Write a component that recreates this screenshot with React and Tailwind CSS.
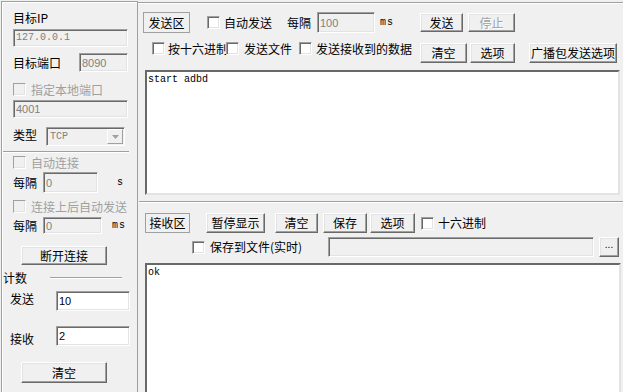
import React from 'react';

// Sunken edit box, classic Windows look
const Field = ({ className = '', disabled, mono, children }) => (
  <div
    className={`flex items-center overflow-hidden border border-t-[#a0a0a0] border-l-[#a0a0a0] border-b-white border-r-white shadow-[inset_1px_1px_0_#696969,inset_-1px_-1px_0_#e3e3e3] pl-[2px] ${
      disabled ? 'bg-[#f0f0f0] text-[#808080]' : 'bg-white text-black'
    } ${mono ? "font-['Liberation_Mono',monospace] text-[10px]" : "font-['Liberation_Sans',sans-serif] text-[11px]"} ${className}`}
  >
    {children}
  </div>
);

const Btn = ({ className = '', disabled, children }) => (
  <div
    className={`flex items-center justify-center bg-[#f0f0f0] border border-t-white border-l-white border-b-[#696969] border-r-[#696969] shadow-[inset_-1px_-1px_0_#a0a0a0,inset_1px_1px_0_#e3e3e3] ${
      disabled ? 'text-[#a0a0a0] [text-shadow:1px_1px_0_#fff]' : 'text-black'
    } ${className}`}
  >
    {children}
  </div>
);

const Check = ({ disabled, className = '' }) => (
  <div
    className={`w-[13px] h-[13px] shrink-0 border border-t-[#a0a0a0] border-l-[#a0a0a0] border-b-white border-r-white ${
      disabled ? 'bg-[#f0f0f0] shadow-[inset_-1px_-1px_0_#e3e3e3]' : 'bg-white shadow-[inset_1px_1px_0_#696969,inset_-1px_-1px_0_#e3e3e3]'
    } ${className}`}
  />
);

const Area = ({ className = '', children }) => (
  <div
    className={`bg-white border-2 border-t-[#696969] border-l-[#696969] border-b-[#e3e3e3] border-r-[#e3e3e3] font-['Liberation_Mono',monospace] text-[10px] leading-[12px] pl-[1px] pt-[2px] ${className}`}
  >
    {children}
  </div>
);

const LeftPanel = () => (
  <div className="ml-[1px] mt-[1px] w-[137px] h-[400px] shrink-0 border-l border-t border-r border-[#a0a0a0] shadow-[inset_1px_1px_0_#fff] flex flex-col pl-[11px]">
    <div className="mt-[10px] h-[12px]">目标IP</div>
    <Field disabled mono className="mt-[5px] w-[115px] h-[18px]">127.0.0.1</Field>
    <div className="mt-[6px] h-[19px] flex items-center">
      <span className="w-[48px]">目标端口</span>
      <Field disabled className="ml-[18px] w-[49px] h-[19px]">8090</Field>
    </div>
    <div className="mt-[11px] h-[13px] flex items-center text-[#a0a0a0]">
      <Check disabled />
      <span className="ml-[5px]">指定本地端口</span>
    </div>
    <Field disabled className="mt-[4px] w-[115px] h-[18px]">4001</Field>
    <div className="mt-[9px] h-[19px] flex items-center">
      <span className="w-[24px] -mt-[4px]">类型</span>
      <div className="ml-[9px] w-[79px] h-[19px] flex items-center justify-between border border-t-[#a0a0a0] border-l-[#a0a0a0] border-b-white border-r-white shadow-[inset_1px_1px_0_#696969] bg-[#f0f0f0] pl-[3px] pr-[1px] font-['Liberation_Mono',monospace] text-[10px] text-[#808080]">
        <span>TCP</span>
        <div className="w-[16px] h-[15px] flex items-center justify-center border border-t-white border-l-white border-b-[#a0a0a0] border-r-[#a0a0a0]">
          <svg width="7" height="4" viewBox="0 0 7 4"><path d="M0 0h7L3.5 4z" fill="#a0a0a0" /></svg>
        </div>
      </div>
    </div>
    <div className="mt-[5px] -ml-[10px] w-[126px] h-[2px] border-t border-[#a0a0a0] border-b border-b-white" />
    <div className="mt-[3px] h-[13px] flex items-center text-[#a0a0a0]">
      <Check disabled />
      <span className="ml-[5px]">自动连接</span>
    </div>
    <div className="mt-[3px] h-[21px] flex items-center">
      <span className="w-[24px]">每隔</span>
      <Field disabled className="ml-[6px] w-[55px] h-[21px]">0</Field>
      <span className="ml-[19px] font-['Liberation_Mono',monospace] text-[10px]">s</span>
    </div>
    <div className="mt-[7px] h-[13px] flex items-center text-[#a0a0a0]">
      <Check disabled />
      <span className="ml-[5px]">连接上后自动发送</span>
    </div>
    <div className="mt-[4px] h-[17px] flex items-center">
      <span className="w-[24px]">每隔</span>
      <Field disabled className="ml-[6px] w-[59px] h-[17px]">0</Field>
      <span className="ml-[10px] font-['Liberation_Mono',monospace] text-[10px] tracking-[1px]">ms</span>
    </div>
    <Btn className="mt-[12px] ml-[8px] w-[86px] h-[19px]">断开连接</Btn>
    <div className="mt-[7px] h-[12px] -ml-[10px] flex items-center">
      <span className="w-[24px]">计数</span>
      <div className="ml-[23px] w-[72px] h-[2px] border-t border-[#a0a0a0] border-b border-b-white" />
    </div>
    <div className="mt-[7px] h-[20px] flex items-start -ml-[3px]">
      <span className="mt-[2px] w-[24px]">发送</span>
      <Field className="ml-[22px] w-[74px] h-[20px]">10</Field>
    </div>
    <div className="mt-[15px] h-[20px] flex items-start -ml-[3px]">
      <span className="mt-[7px] w-[24px]">接收</span>
      <Field className="ml-[22px] w-[74px] h-[20px]">2</Field>
    </div>
    <Btn className="mt-[16px] ml-[8px] w-[86px] h-[21px]">清空</Btn>
  </div>
);

const RightPanel = () => (
  <div className="mt-[2px] flex-1 h-[400px] border-t border-[#a0a0a0] shadow-[inset_0_1px_0_#fff] flex flex-col">
    {/* send row 1 */}
    <div className="mt-[9px] h-[21px] pl-[5px] flex items-center">
      <div className="w-[47px] h-[21px] flex items-center justify-center border border-[#a0a0a0]">发送区</div>
      <Check className="ml-[17px]" />
      <span className="ml-[4px] w-[48px]">自动发送</span>
      <span className="ml-[15px] w-[24px]">每隔</span>
      <Field disabled className="ml-[6px] w-[58px] h-[21px]">100</Field>
      <span className="ml-[5px] w-[40px] font-['Liberation_Mono',monospace] text-[10px] tracking-[1px]">ms</span>
      <Btn className="w-[43px] h-[19px]">发送</Btn>
      <Btn disabled className="ml-[5px] w-[47px] h-[19px]">停止</Btn>
    </div>
    {/* send row 2 */}
    <div className="mt-[9px] h-[21px] pl-[14px] flex items-start">
      <Check />
      <span className="ml-[3px] w-[58px] whitespace-nowrap mt-[1px]">按十六进制</span>
      <Check className="relative z-10" />
      <span className="ml-[5px] w-[48px] mt-[1px]">发送文件</span>
      <Check className="ml-[7px]" />
      <span className="ml-[4px] w-[96px] mt-[1px]">发送接收到的数据</span>
      <Btn className="ml-[8px] mt-[1px] w-[47px] h-[20px]">清空</Btn>
      <Btn className="ml-[3px] mt-[1px] w-[45px] h-[20px]">选项</Btn>
      <Btn className="ml-[14px] mt-[1px] w-[88px] h-[20px]">广播包发送选项</Btn>
    </div>
    <div className="pl-[7px] mt-[7px]">
      <Area className="w-[475px] h-[125px]">start adbd</Area>
    </div>
    <div className="mt-[6px] ml-[1px] h-[2px] border-t border-[#a0a0a0] border-b border-b-white" />
    {/* receive row 1 */}
    <div className="mt-[10px] h-[20px] pl-[7px] flex items-center">
      <div className="w-[45px] h-[20px] flex items-center justify-center border border-[#a0a0a0]">接收区</div>
      <Btn className="ml-[16px] w-[59px] h-[20px]">暂停显示</Btn>
      <Btn className="ml-[10px] w-[43px] h-[20px]">清空</Btn>
      <Btn className="ml-[5px] w-[44px] h-[20px]">保存</Btn>
      <Btn className="ml-[3px] w-[45px] h-[20px]">选项</Btn>
      <Check className="ml-[6px]" />
      <span className="ml-[4px]">十六进制</span>
    </div>
    {/* receive row 2 */}
    <div className="mt-[4px] h-[20px] pl-[54px] flex items-center">
      <Check />
      <span className="ml-[5px] w-[118px]">保存到文件(实时)</span>
      <Field disabled className="w-[266px] h-[20px]" />
      <Btn className="ml-[5px] w-[20px] h-[20px] text-[#a0a0a0] font-['Liberation_Sans',sans-serif] text-[10px] pb-[4px]">...</Btn>
    </div>
    <div className="pl-[7px] mt-[6px]">
      <Area className="w-[476px] h-[140px]">ok</Area>
    </div>
  </div>
);

export default function App() {
  return (
    <div className="w-[623px] h-[392px] overflow-hidden bg-[#f0f0f0] flex font-['Noto_Sans_CJK_SC',sans-serif] text-[12px] leading-[12px] text-black">
      <LeftPanel />
      <RightPanel />
    </div>
  );
}
